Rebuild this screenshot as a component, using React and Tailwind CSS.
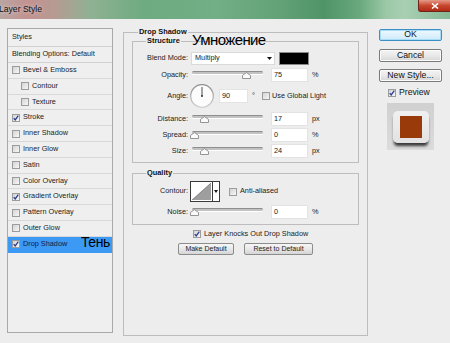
import React from "react";

function Check({ checked, className = "" }) {
  return (
    <span
      className={`flex h-[8px] w-[8px] shrink-0 items-center justify-center border border-[#9c9c9c] bg-linear-to-br from-[#d4d4d4] to-[#f7f7f7] ${className}`}
    >
      {checked && (
        <svg width="6" height="6" viewBox="0 0 6 6">
          <path d="M0.7 3.1 L2.2 4.9 L5.3 0.6" fill="none" stroke="#27388f" strokeWidth="1.2" />
        </svg>
      )}
    </span>
  );
}

function Slider({ pos }) {
  return (
    <div className="relative h-[14px] w-[71px] shrink-0">
      <div className="absolute left-0 right-0 top-[3px] h-[3px] rounded-full border-t border-[#8e8e8e] bg-[#c2c2c2] shadow-[0_1px_0_#ffffff]" />
      <svg
        className="absolute top-[4px]"
        style={{ left: pos - 4.5 }}
        width="9"
        height="7"
        viewBox="0 0 9 7"
      >
        <path d="M0.5 6.5 V3.4 L4.5 0.6 L8.5 3.4 V6.5 Z" fill="#fbfbfb" stroke="#8a8a8a" strokeWidth="0.9" />
      </svg>
    </div>
  );
}

function Field({ value, className = "" }) {
  return (
    <div
      className={`flex h-[14px] shrink-0 items-center border border-[#e3e3e3] bg-white pl-[2px] text-[7.3px] text-[#222] ${className}`}
    >
      {value}
    </div>
  );
}

function Label({ children }) {
  return (
    <div className="w-[55px] shrink-0 text-right text-[7.3px] text-[#222]">{children}</div>
  );
}

function SliderRow({ label, pos, value, unit, className = "" }) {
  return (
    <div className={`flex h-[14px] items-center ${className}`}>
      <Label>{label}</Label>
      <div className="ml-[4px]">
        <Slider pos={pos} />
      </div>
      <Field value={value} className="ml-[8px] w-[37px]" />
      <span className="ml-[4px] text-[7.3px] text-[#222]">{unit}</span>
    </div>
  );
}

function WinButton({ children, primary, className = "" }) {
  return (
    <div
      className={`flex w-[63px] items-center justify-center rounded-[2px] border text-[8.7px] text-[#111] ${
        primary
          ? "border-[#3c8fc4] bg-linear-to-b from-[#eef8fe] to-[#cfeafb] shadow-[inset_0_0_0_1px_#a8dcf6]"
          : "border-[#7a7a7a] bg-linear-to-b from-[#f4f4f4] via-[#e9e9e9] to-[#d6d6d6] shadow-[inset_0_0_0_1px_#fbfbfb]"
      } ${className}`}
    >
      {children}
    </div>
  );
}

function SmallButton({ children, className = "" }) {
  return (
    <div
      className={`flex h-[12px] items-center justify-center rounded-[2px] border border-[#8c8c8c] bg-linear-to-b from-[#f6f6f6] via-[#e8e8e8] to-[#d5d5d5] text-[7px] text-[#222] ${className}`}
    >
      {children}
    </div>
  );
}

const items = [
  { t: "Bevel & Emboss" },
  { t: "Contour", indent: true },
  { t: "Texture", indent: true },
  { t: "Stroke", c: true },
  { t: "Inner Shadow" },
  { t: "Inner Glow" },
  { t: "Satin" },
  { t: "Color Overlay" },
  { t: "Gradient Overlay", c: true },
  { t: "Pattern Overlay" },
  { t: "Outer Glow" },
  { t: "Drop Shadow", c: true, sel: true },
];

export default function App() {
  return (
    <div className="relative h-[343px] w-[450px] overflow-hidden bg-[#ededed] font-['Liberation_Sans',Arial,sans-serif]">
      {/* Title bar */}
      <div className="flex h-[19px] items-start justify-between bg-[linear-gradient(90deg,#b8a6a2_0%,#c39290_6%,#b79a93_12%,#8fb193_20%,#6eab80_32%,#72ae86_48%,#63a276_62%,#4f9467_72%,#6aa97d_80%,#9dc9a8_86%,#a9cfb3_90%,#86b995_100%)]">
        <span className="ml-[-1px] mt-[4px] text-[8.6px] leading-[10px] text-[#101010] [text-shadow:0_0_4px_rgba(255,255,255,0.7)]">
          Layer Style
        </span>
        <div className="flex h-[12px] w-[32px] items-center justify-center rounded-bl-[3px] border-b border-l border-[#6e2418] bg-linear-to-b from-[#e49a88] via-[#c9462f] to-[#b02b15]">
          <svg width="8" height="6" viewBox="0 0 8 6">
            <path d="M1 0.5 L7 5.5 M7 0.5 L1 5.5" stroke="#ffffff" strokeWidth="1.6" />
          </svg>
        </div>
      </div>

      {/* Body */}
      <div className="flex items-start">
        {/* Left styles list */}
        <div className="ml-[7px] mt-[9px] h-[305px] w-[106px] shrink-0 border border-[#a9a9a9] bg-[#efefef] text-[7.3px] text-[#1c1c1c]">
          <div className="flex h-[18px] items-center border-b border-[#d2d2d2] pl-[4px]">Styles</div>
          <div className="flex h-[16px] items-center border-b border-[#d2d2d2] pl-[4px]">
            Blending Options: Default
          </div>
          {items.map((it) => (
            <div
              key={it.t}
              className={`flex h-[15.8px] items-center border-b ${
                it.sel ? "border-[#3c99f4] bg-[#3c99f4] text-[#12204a]" : "border-[#d9d9d9]"
              } ${it.indent ? "pl-[13px]" : "pl-[4px]"}`}
            >
              <Check checked={it.c} />
              <span className="ml-[3px]">{it.t}</span>
            </div>
          ))}
        </div>

        {/* Middle: Drop Shadow */}
        <fieldset className="ml-[10px] mt-[8px] h-[309px] w-[245px] shrink-0 border border-[#bdbdbd] px-[8px]">
          <legend className="ml-[6px] px-[1px] text-[7.4px] font-bold leading-[10px] text-[#111]">
            Drop Shadow
          </legend>

          {/* Structure */}
          <fieldset className="mt-[-1px] border border-[#bdbdbd] pb-[4px]">
            <legend className="ml-[13px] px-[1px] text-[7.4px] font-bold leading-[10px] text-[#111]">
              Structure
            </legend>

            <div className="mt-[6px] flex h-[13px] items-center">
              <Label>Blend Mode:</Label>
              <div className="ml-[3px] flex h-[13px] w-[84px] items-center justify-between border border-[#dadada] bg-white pl-[3px] pr-[2px] text-[7.3px] text-[#222]">
                <span>Multiply</span>
                <svg width="5" height="3" viewBox="0 0 5 3">
                  <path d="M0 0 H5 L2.5 3 Z" fill="#111" />
                </svg>
              </div>
              <div className="ml-[4px] h-[13px] w-[30px] border border-[#8a8a8a] bg-black" />
            </div>

            <SliderRow label="Opacity:" pos={54} value="75" unit="%" className="mt-[3px]" />

            <div className="mt-[2px] flex h-[24px] items-center">
              <Label>Angle:</Label>
              <svg className="ml-[2px] shrink-0" width="24" height="24" viewBox="0 0 24 24">
                <defs>
                  <linearGradient id="dialRim" x1="0" y1="0" x2="0" y2="1">
                    <stop offset="0" stopColor="#8d8d8d" />
                    <stop offset="1" stopColor="#d0d0d0" />
                  </linearGradient>
                </defs>
                <circle cx="12" cy="12" r="11.3" fill="#fcfcfc" stroke="url(#dialRim)" strokeWidth="1.2" />
                <line x1="12" y1="12" x2="12" y2="3" stroke="#3a3a3a" strokeWidth="0.9" />
                <circle cx="12" cy="12" r="1" fill="#333" />
              </svg>
              <Field value="90" className="ml-[5px] w-[29px]" />
              <span className="ml-[4px] w-[10px] text-[7.3px] text-[#222]">°</span>
              <Check />
              <span className="ml-[2px] text-[7.3px] text-[#222]">Use Global Light</span>
            </div>

            <SliderRow label="Distance:" pos={12} value="17" unit="px" className="mt-[4px]" />
            <SliderRow label="Spread:" pos={2} value="0" unit="%" className="mt-[2px]" />
            <SliderRow label="Size:" pos={12} value="24" unit="px" className="mt-[2px]" />
          </fieldset>

          {/* Quality */}
          <fieldset className="mt-[5px] border border-[#bdbdbd] pb-[5px]">
            <legend className="ml-[13px] px-[1px] text-[7.4px] font-bold leading-[10px] text-[#111]">
              Quality
            </legend>
            <div className="mt-[3px] flex h-[21px] items-center">
              <Label>Contour:</Label>
              <div className="ml-[2px] flex h-[21px] w-[30px] shrink-0 items-stretch border border-[#3a3a3a] bg-white">
                <svg width="21" height="19" viewBox="0 0 21 19" className="shrink-0">
                  <rect width="21" height="19" fill="#ffffff" />
                  <path d="M1 18 L20 1 V18 Z" fill="#9e9e9e" />
                  <path d="M1 18 L20 1" stroke="#5a5a5a" strokeWidth="0.6" />
                </svg>
                <div className="flex flex-1 items-center justify-center border-l border-[#3a3a3a]">
                  <svg width="4" height="3" viewBox="0 0 4 3">
                    <path d="M0 0 H4 L2 3 Z" fill="#111" />
                  </svg>
                </div>
              </div>
              <Check className="ml-[9px]" />
              <span className="ml-[3px] text-[7.3px] text-[#222]">Anti-aliased</span>
            </div>
            <SliderRow label="Noise:" pos={2} value="0" unit="%" className="mt-[3px]" />
          </fieldset>

          <div className="mt-[4px] flex h-[10px] items-center pl-[61px]">
            <Check checked />
            <span className="ml-[3px] text-[7.3px] text-[#222]">Layer Knocks Out Drop Shadow</span>
          </div>

          <div className="mt-[4px] flex pl-[46px]">
            <SmallButton className="w-[56px]">Make Default</SmallButton>
            <SmallButton className="ml-[10px] w-[69px]">Reset to Default</SmallButton>
          </div>
        </fieldset>

        {/* Right column */}
        <div className="ml-[11px] mt-[10px] flex w-[63px] shrink-0 flex-col">
          <WinButton primary className="h-[12px]">OK</WinButton>
          <WinButton className="mt-[8px] h-[13px]">Cancel</WinButton>
          <WinButton className="mt-[7px] h-[13px]">New Style...</WinButton>
          <div className="ml-[9px] mt-[7px] flex h-[8px] items-center">
            <Check checked />
            <span className="ml-[3px] text-[8.7px] text-[#111]">Preview</span>
          </div>
          <div className="ml-[8px] mt-[6px] flex h-[47px] w-[47px] items-start justify-center bg-linear-to-b from-[#d0d0d0] to-[#dcdcdc] pt-[8px]">
            <div className="flex h-[32px] w-[36px] items-center justify-center rounded-[5px] bg-linear-to-b from-[#f0f0f0] to-[#e2e2e2] shadow-[0_4px_3px_-1px_rgba(0,0,0,0.75)]">
              <div className="h-[22px] w-[22px] bg-[#993a0a]" />
            </div>
          </div>
        </div>
      </div>

      {/* Overlay annotations */}
      <span className="absolute left-[192px] top-[31px] text-[15px] leading-[18px] tracking-[-0.6px] text-black">
        Умножение
      </span>
      <span className="absolute left-[81px] top-[234px] text-[14px] leading-[16px] tracking-[-0.4px] text-black">
        Тень
      </span>
    </div>
  );
}
